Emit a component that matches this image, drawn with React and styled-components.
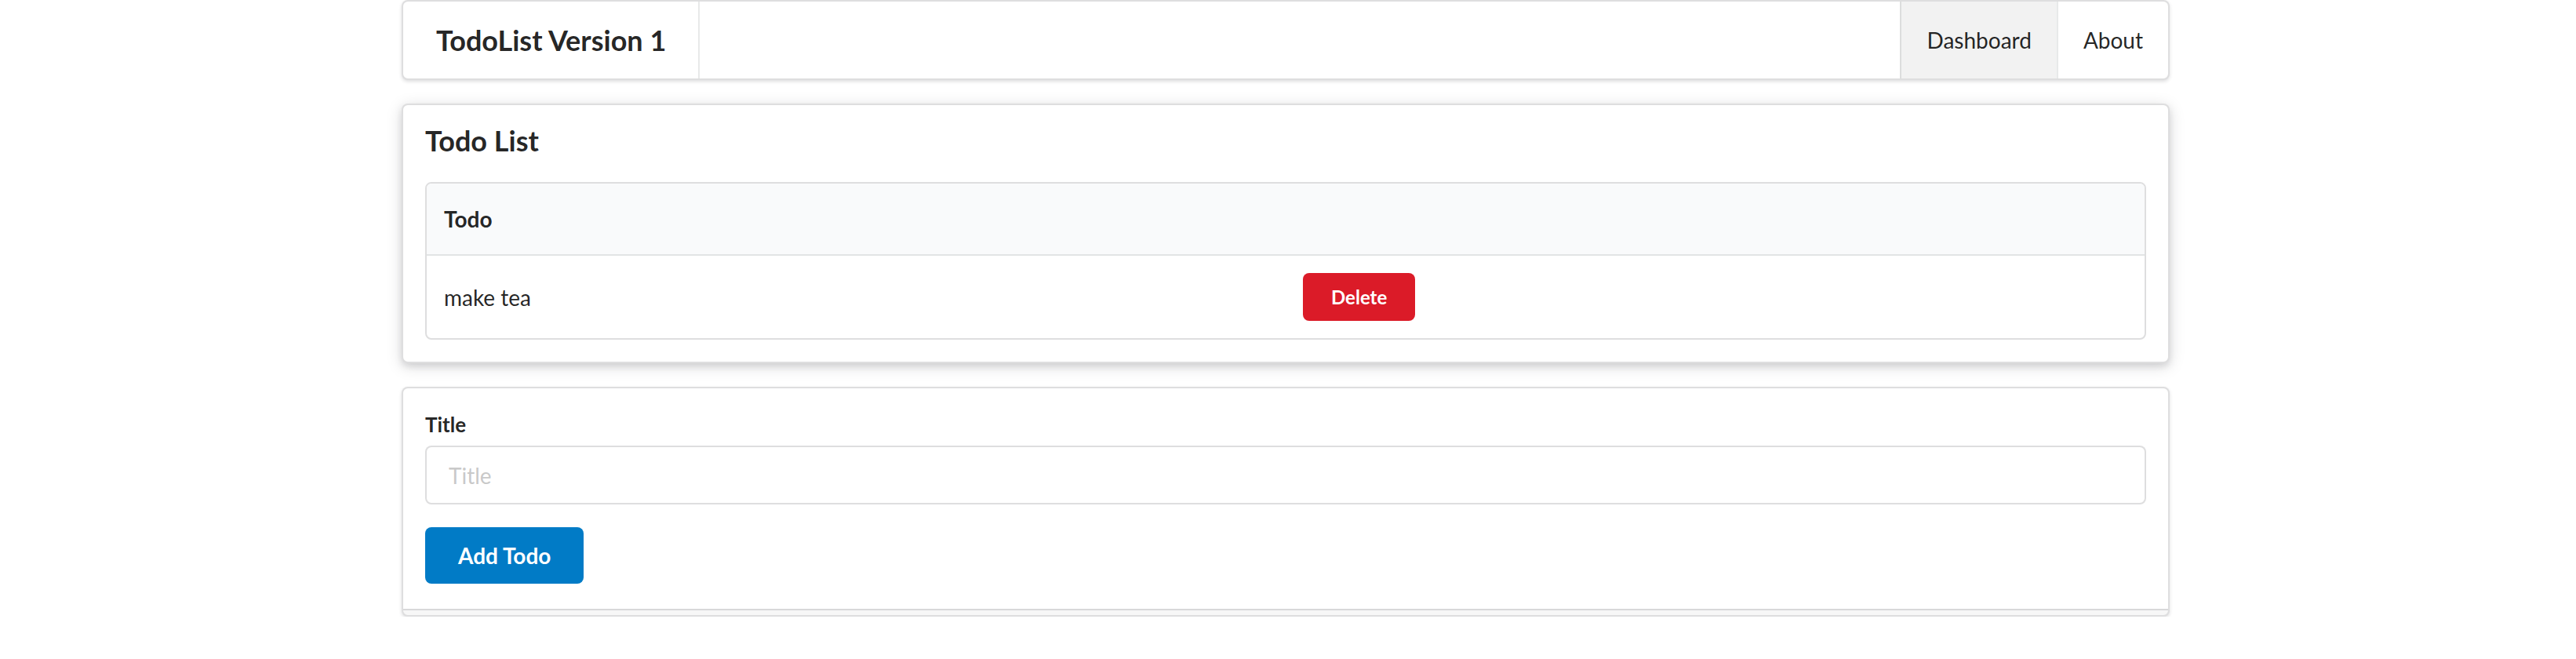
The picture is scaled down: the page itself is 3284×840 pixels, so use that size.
import React, { useState } from "react";
import styled, { createGlobalStyle } from "styled-components";

const GlobalStyle = createGlobalStyle`
  html, body {
    margin: 0;
    padding: 0;
    background: #ffffff;
  }
  body {
    font-family: Lato, "Helvetica Neue", Arial, sans-serif;
    font-size: 28px;
    line-height: 1.4285em;
    color: rgba(0, 0, 0, 0.87);
  }
  * {
    box-sizing: border-box;
  }
`;

const Container = styled.div`
  width: 2254px;
  margin: 0 0 0 calc(50% - 1130px);
`;

const Menu = styled.nav`
  display: flex;
  height: 102px;
  background: #fff;
  border: 2px solid rgba(34, 36, 38, 0.15);
  border-radius: 8px;
  box-shadow: 0 2px 4px 0 rgba(34, 36, 38, 0.15);
  overflow: hidden;
`;

const HeaderItem = styled.div`
  display: flex;
  align-items: center;
  padding: 0 41px 0 42px;
  font-size: 36px;
  font-weight: 700;
  line-height: 1;
  border-right: 2px solid rgba(34, 36, 38, 0.1);
`;

const RightMenu = styled.div`
  display: flex;
  margin-left: auto;
`;

const MenuItem = styled.a`
  display: flex;
  align-items: center;
  padding: 0 32px;
  font-size: 28px;
  line-height: 1;
  color: rgba(0, 0, 0, 0.87);
  text-decoration: none;
  cursor: pointer;
  border-left: 2px solid rgba(34, 36, 38, 0.1);
  background: ${(p) => (p.$active ? "rgba(0, 0, 0, 0.05)" : "transparent")};
`;

const Segment = styled.section`
  position: relative;
  margin-top: 30px;
  padding: 28px;
  background: #fff;
  border: 2px solid rgba(34, 36, 38, 0.15);
  border-radius: 8px;
  box-shadow: ${(p) =>
    p.$raised
      ? "0 4px 8px 0 rgba(34, 36, 38, 0.12), 0 4px 20px 0 rgba(34, 36, 38, 0.15)"
      : "0 2px 4px 0 rgba(34, 36, 38, 0.15)"};

  ${(p) =>
    p.$stacked &&
    `
    padding-bottom: 40px;
    &:after {
      content: "";
      position: absolute;
      left: 0;
      bottom: 0;
      width: 100%;
      height: 6px;
      border-top: 2px solid rgba(34, 36, 38, 0.15);
      background: rgba(0, 0, 0, 0.03);
      border-radius: 0 0 6px 6px;
    }
  `}
`;

const Heading = styled.h3`
  margin: -6px 0 30px;
  font-size: 36px;
  font-weight: 700;
  line-height: 46px;
`;

const Table = styled.table`
  width: 100%;
  table-layout: fixed;
  border-collapse: separate;
  border-spacing: 0;
  border: 2px solid rgba(34, 36, 38, 0.15);
  border-radius: 8px;
  font-size: 28px;
  overflow: hidden;
`;

const Th = styled.th`
  padding: 25px 22px;
  background: #f9fafb;
  text-align: left;
  font-weight: 700;
  line-height: 40px;
  border-bottom: 2px solid rgba(34, 36, 38, 0.1);
`;

const Td = styled.td`
  padding: 22px;
  line-height: 40px;
  vertical-align: middle;
`;

const Button = styled.button`
  display: inline-block;
  border: none;
  border-radius: 8px;
  color: #fff;
  font-family: Lato, "Helvetica Neue", Arial, sans-serif;
  font-weight: 700;
  line-height: 1;
  cursor: pointer;
  background: ${(p) => (p.$color === "red" ? "#db1b28" : "#017bc6")};
  font-size: ${(p) => (p.$tiny ? "24px" : "28px")};
  padding: ${(p) => (p.$tiny ? "19px 36px 18px" : "22px 42px")};
  vertical-align: middle;
`;

const Field = styled.div`
  margin-bottom: 29px;
`;

const Label = styled.label`
  display: block;
  margin-bottom: 8px;
  font-size: 26px;
  font-weight: 700;
  line-height: 37px;
`;

const Input = styled.input`
  display: block;
  width: 100%;
  height: 75px;
  padding: 0 28px;
  border: 2px solid rgba(34, 36, 38, 0.15);
  border-radius: 8px;
  font-family: Lato, "Helvetica Neue", Arial, sans-serif;
  font-size: 28px;
  color: rgba(0, 0, 0, 0.87);
  outline: none;

  &::placeholder {
    color: rgba(191, 191, 191, 0.87);
  }
`;

export default function App() {
  const [todos, setTodos] = useState([{ id: 1, title: "make tea" }]);
  const [title, setTitle] = useState("");

  function addTodo(e) {
    e.preventDefault();
    if (!title.trim()) return;
    setTodos([...todos, { id: Date.now(), title }]);
    setTitle("");
  }

  function deleteTodo(id) {
    setTodos(todos.filter((t) => t.id !== id));
  }

  return (
    <>
      <GlobalStyle />
      <Container>
        <Menu>
          <HeaderItem>TodoList Version 1</HeaderItem>
          <RightMenu>
            <MenuItem $active>Dashboard</MenuItem>
            <MenuItem>About</MenuItem>
          </RightMenu>
        </Menu>

        <Segment $raised>
          <Heading>Todo List</Heading>
          <Table>
            <thead>
              <tr>
                <Th>Todo</Th>
                <Th />
              </tr>
            </thead>
            <tbody>
              {todos.map((todo) => (
                <tr key={todo.id}>
                  <Td>{todo.title}</Td>
                  <Td>
                    <Button $color="red" $tiny onClick={() => deleteTodo(todo.id)}>
                      Delete
                    </Button>
                  </Td>
                </tr>
              ))}
            </tbody>
          </Table>
        </Segment>

        <Segment $stacked as="form" onSubmit={addTodo}>
          <Field>
            <Label>Title</Label>
            <Input
              placeholder="Title"
              value={title}
              onChange={(e) => setTitle(e.target.value)}
            />
          </Field>
          <Button type="submit">Add Todo</Button>
        </Segment>
      </Container>
    </>
  );
}
